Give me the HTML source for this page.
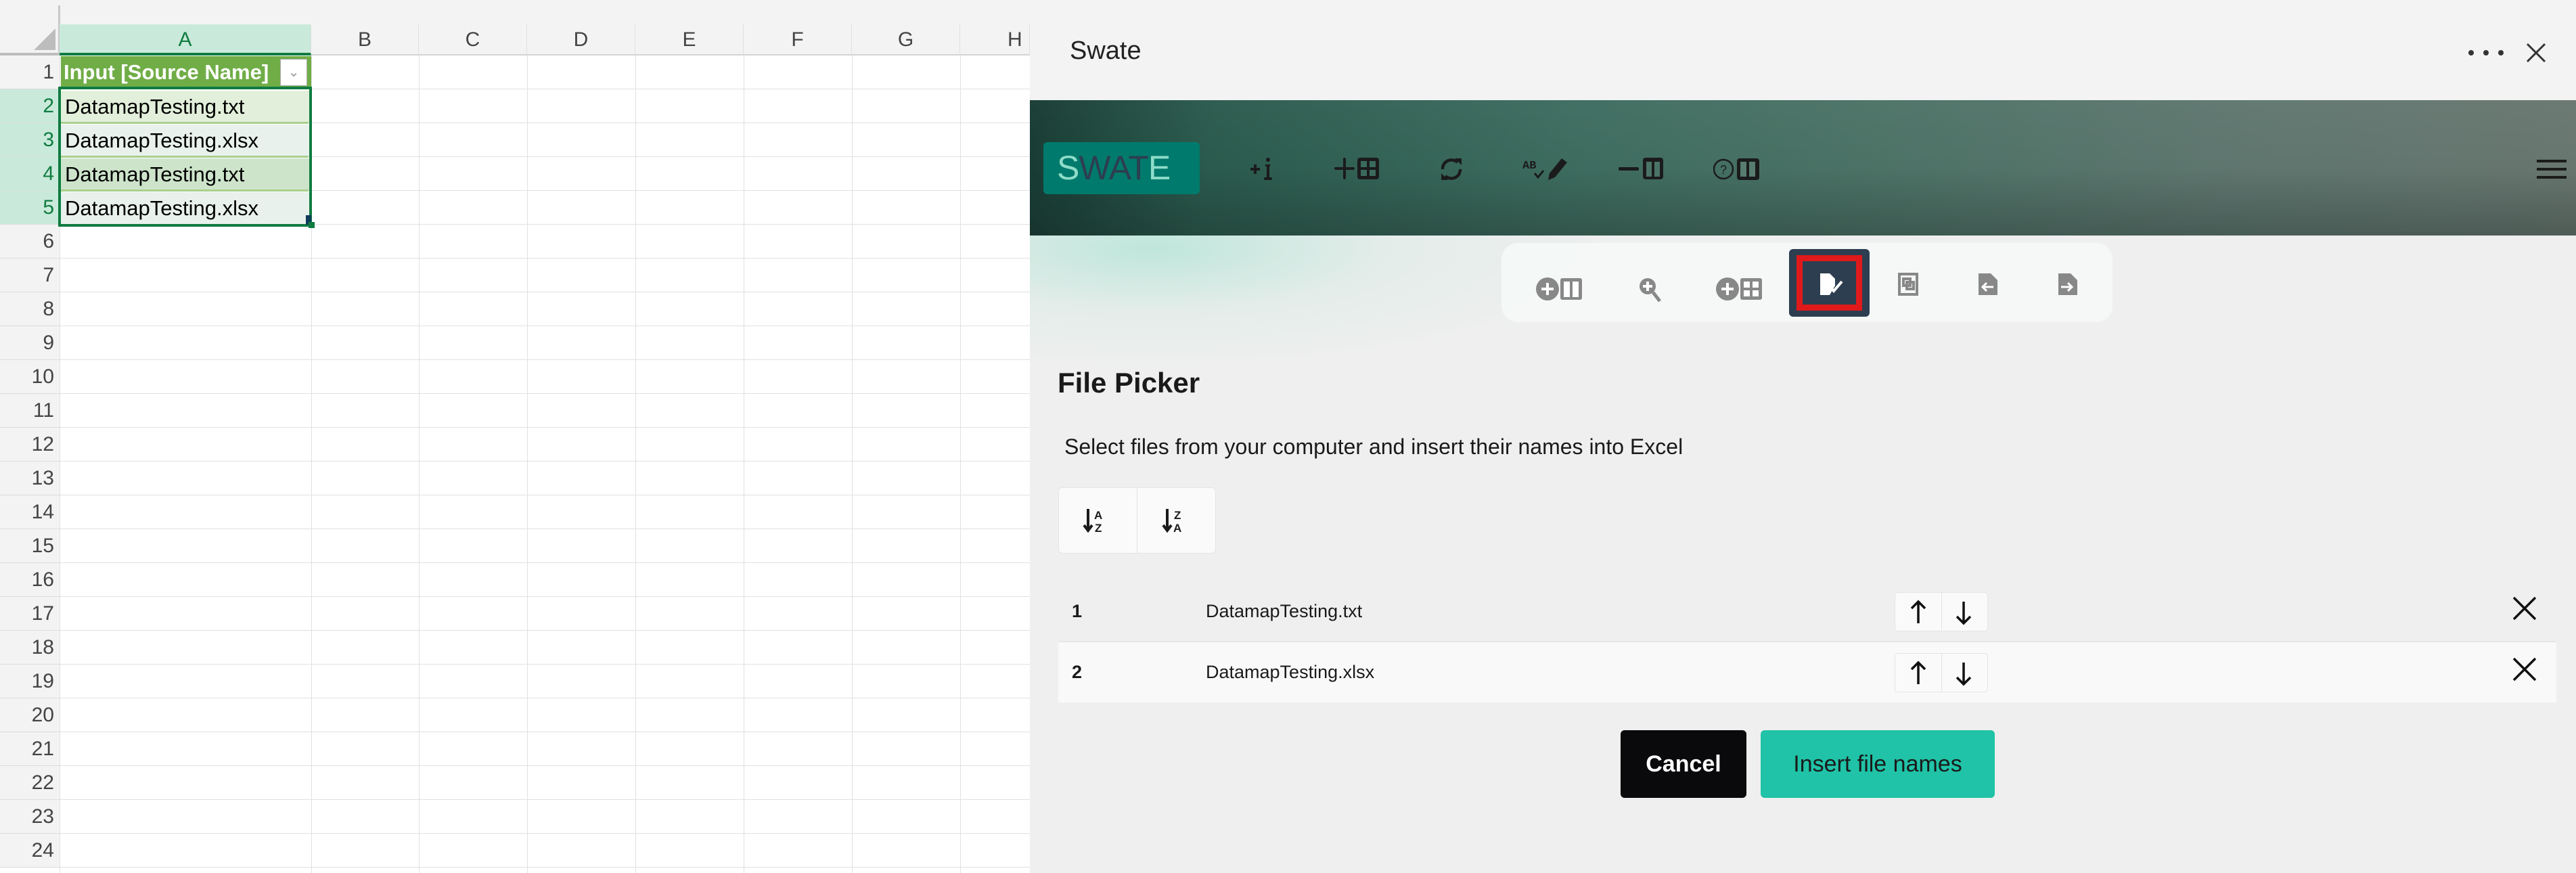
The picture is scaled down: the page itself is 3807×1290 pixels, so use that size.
<!DOCTYPE html>
<html><head><meta charset="utf-8"><style>
*{margin:0;padding:0;box-sizing:border-box}
html,body{width:3807px;height:1290px;overflow:hidden}
body{background:#fff;font-family:"Liberation Sans",sans-serif;position:relative}
.abs{position:absolute}
.xl{left:0;top:0;width:1522px;height:1290px;background:#fff;overflow:hidden}
.colh{top:36px;height:46px;background:#f3f3f3;border-bottom:2px solid #d4d4d4;border-right:1px solid #e0e0e0;color:#444;font-size:30px;text-align:center;line-height:46px}
.rowh{left:0;width:88px;height:50px;background:#f3f3f3;border-bottom:1px solid #dcdcdc;color:#444;font-size:30px;text-align:right;padding-right:8px;line-height:50px}
.vl{top:82px;width:1px;height:1208px;background:#e1e1e1}
.hl{left:88px;width:1434px;height:1px;background:#e1e1e1}
.cell{left:90px;width:368px;height:48px;font-size:31px;line-height:48px;padding-left:6px;color:#000}
.panel{left:1522px;top:0;width:2285px;height:1290px;background:#efefef;overflow:hidden}
.ico{position:absolute;top:232px}
.tb{position:absolute;top:410px}
</style></head><body>
<div class="abs xl">
 <div class="abs" style="left:0;top:0;width:1522px;height:36px;background:#f3f3f3"></div>
 <div class="abs" style="left:0;top:36px;width:88px;height:46px;background:#f3f3f3;border-bottom:4px solid #bdbdbd"></div>
 <div class="abs" style="left:86px;top:8px;width:3px;height:74px;background:#c8c8c8"></div>
 <svg class="abs" style="left:50px;top:42px" width="32" height="32"><polygon points="32,0 32,32 0,32" fill="#bdbdbd"/></svg>
 <div class="abs colh" style="left:88px;width:372px;background:#c9eadb;color:#107c41;border-bottom:4px solid #107c41">A</div>
 <div class="abs colh" style="left:460px;width:159px">B</div>
 <div class="abs colh" style="left:619px;width:160px">C</div>
 <div class="abs colh" style="left:779px;width:160px">D</div>
 <div class="abs colh" style="left:939px;width:160px">E</div>
 <div class="abs colh" style="left:1099px;width:160px">F</div>
 <div class="abs colh" style="left:1259px;width:160px">G</div>
 <div class="abs colh" style="left:1419px;width:103px;text-align:left;padding-left:70px">H</div>
 <div class="abs vl" style="left:88px"></div>
 <div class="abs vl" style="left:460px"></div><div class="abs vl" style="left:619px"></div><div class="abs vl" style="left:779px"></div><div class="abs vl" style="left:939px"></div><div class="abs vl" style="left:1099px"></div><div class="abs vl" style="left:1259px"></div><div class="abs vl" style="left:1419px"></div>
 <div id="rows"></div>
 <div class="abs" style="left:90px;top:83px;width:370px;height:49px;background:#70ad47"></div>
 <div class="abs" style="left:94px;top:84px;color:#fff;font-weight:bold;font-size:31px;line-height:46px">Input [Source Name]</div>
 <div class="abs" style="left:414px;top:87px;width:40px;height:40px;background:#fff;border:1px solid #aaa;color:#999;font-size:20px;text-align:center;line-height:38px">⌄</div>
 <div class="abs cell" style="top:134px;background:#e2efda">DatamapTesting.txt</div>
 <div class="abs cell" style="top:184px;background:#e8f1ec">DatamapTesting.xlsx</div>
 <div class="abs cell" style="top:234px;background:#cde4cb">DatamapTesting.txt</div>
 <div class="abs cell" style="top:284px;background:#e8f1ec">DatamapTesting.xlsx</div>
 <div class="abs" style="left:90px;top:180px;width:366px;height:3px;background:#a9d08e"></div>
 <div class="abs" style="left:90px;top:230px;width:366px;height:3px;background:#a9d08e"></div>
 <div class="abs" style="left:90px;top:280px;width:366px;height:3px;background:#a9d08e"></div>
 <div class="abs" style="left:86px;top:128px;width:375px;height:207px;border:4px solid #107c41"></div>
 <div class="abs" style="left:452px;top:318px;width:8px;height:14px;background:#0e3d5a"></div>
 <div class="abs" style="left:456px;top:328px;width:9px;height:9px;background:#107c41"></div>
</div>
<script>
var h='';for(var i=1;i<=24;i++){var t=82+(i-1)*50;var sel=i>=2&&i<=5;
h+='<div class="abs rowh" style="top:'+t+'px;'+(sel?'background:#c9eadb;color:#107c41;':'')+'">'+i+'</div>';
h+='<div class="abs hl" style="top:'+(t+49)+'px"></div>';}
document.getElementById('rows').innerHTML=h;
</script>
<div class="abs panel">
 <div class="abs" style="left:0;top:0;width:2285px;height:148px;background:#f3f3f3"></div>
 <div class="abs" style="left:59px;top:54px;font-size:38px;color:#222">Swate</div>
 <svg class="abs" style="left:2122px;top:66px" width="60" height="24"><circle cx="8" cy="12" r="4" fill="#333"/><circle cx="30" cy="12" r="4" fill="#333"/><circle cx="52" cy="12" r="4" fill="#333"/></svg>
 <svg class="abs" style="left:2210px;top:62px" width="32" height="32"><path d="M3 3L29 29M29 3L3 29" stroke="#333" stroke-width="3"/></svg>
 <div class="abs" style="left:0;top:148px;width:2285px;height:200px;background:linear-gradient(100deg,#163a32 0%,#2a5a4d 12%,#3d6c5f 35%,#4c7266 55%,#5f766f 78%,#68766f 100%)"></div>
 <div class="abs" style="left:0;top:148px;width:2285px;height:200px;background:linear-gradient(180deg,rgba(255,255,255,0.03) 0%,rgba(0,0,0,0) 50%,rgba(20,30,28,.3) 100%)"></div>
 <div class="abs" style="left:20px;top:210px;width:231px;height:77px;background:#007a6c;border-radius:6px;font-size:50px;line-height:77px;padding-left:20px;letter-spacing:-1px"><span style="color:#8ddcc9">S</span><span style="color:#2d3e50">WAT</span><span style="color:#8ddcc9">E</span></div>
 <svg class="ico" style="left:326px" width="36" height="36" viewBox="0 0 36 36" fill="#1b1b1b"><rect x="0" y="16" width="14" height="4"/><rect x="5" y="11" width="4" height="14"/><circle cx="26" cy="4" r="3"/><rect x="22" y="11" width="7" height="3"/><rect x="24" y="11" width="4" height="22"/><rect x="20" y="30" width="12" height="4" rx="2"/></svg>
 <svg class="ico" style="left:450px" width="66" height="34" viewBox="0 0 66 34" fill="#1b1b1b"><rect x="0" y="15" width="30" height="4" rx="2"/><rect x="13" y="1" width="4" height="32" rx="2"/><rect x="34" y="1" width="32" height="32" rx="4"/><rect x="39" y="6" width="9" height="9" fill="#3a6a5e"/><rect x="52" y="6" width="9" height="9" fill="#3a6a5e"/><rect x="39" y="19" width="9" height="9" fill="#3a6a5e"/><rect x="52" y="19" width="9" height="9" fill="#3a6a5e"/></svg>
 <svg class="ico" style="left:604px" width="38" height="36" viewBox="0 0 38 36"><path d="M6 18A13 13 0 0 1 28 8M32 18A13 13 0 0 1 10 28" stroke="#1b1b1b" stroke-width="4.5" fill="none"/><polygon points="24,2 34,2 34,12" fill="#1b1b1b"/><polygon points="4,24 14,34 4,34" fill="#1b1b1b"/></svg>
 <svg class="ico" style="left:728px" width="72" height="36" viewBox="0 0 72 36"><text x="0" y="17" font-size="17" font-weight="bold" font-family="Liberation Mono" fill="#1b1b1b">AB</text><path d="M18 24l5 6 8-10" stroke="#1b1b1b" stroke-width="3" fill="none"/><path d="M38 34l2-10 18-22 8 6-18 22z" fill="#1b1b1b"/></svg>
 <svg class="ico" style="left:870px" width="66" height="34" viewBox="0 0 66 34" fill="#1b1b1b"><rect x="0" y="15" width="30" height="5" rx="2"/><rect x="36" y="1" width="30" height="32" rx="4"/><rect x="41" y="7" width="8" height="22" fill="#4a7367"/><rect x="53" y="7" width="8" height="22" fill="#4a7367"/></svg>
 <svg class="ico" style="left:1010px" width="68" height="36" viewBox="0 0 68 36"><circle cx="15" cy="18" r="14" stroke="#1b1b1b" stroke-width="2.5" fill="none"/><text x="10" y="25" font-size="18" fill="#1b1b1b" font-family="Liberation Sans">?</text><rect x="35" y="2" width="33" height="32" rx="4" fill="#1b1b1b"/><rect x="40" y="7" width="9" height="22" fill="#577c70"/><rect x="53" y="7" width="9" height="22" fill="#577c70"/></svg>
 <svg class="abs" style="left:2227px;top:234px" width="44" height="32"><rect y="2" width="44" height="4" fill="#1b1b1b"/><rect y="14" width="44" height="4" fill="#1b1b1b"/><rect y="26" width="44" height="4" fill="#1b1b1b"/></svg>
 <div class="abs" style="left:0;top:348px;width:2285px;height:942px;background:radial-gradient(ellipse 700px 180px at 180px 20px,#bfe6db 0%,rgba(220,235,230,.6) 50%,rgba(239,239,239,0) 100%),#efefef"></div>
 <div class="abs" style="left:697px;top:359px;width:903px;height:117px;background:rgba(246,250,249,.8);border-radius:24px"></div>
 <div class="abs" style="left:1122px;top:368px;width:119px;height:100px;background:#2d3e50;border-radius:6px"></div>
 <div class="abs" style="left:1133px;top:377px;width:97px;height:82px;border:9px solid #e0191b"></div>
 <svg class="tb" style="left:748px" width="68" height="34" viewBox="0 0 68 34"><circle cx="17" cy="17" r="17" fill="#888"/><rect x="15" y="8" width="4" height="18" fill="#fff"/><rect x="8" y="15" width="18" height="4" fill="#fff"/><rect x="36" y="1" width="32" height="32" rx="3" fill="#888"/><rect x="41" y="6" width="9" height="23" fill="#fff"/><rect x="54" y="6" width="9" height="23" fill="#fff"/></svg>
 <svg class="tb" style="left:900px" width="34" height="36" viewBox="0 0 34 36"><circle cx="13" cy="13" r="12" fill="#888"/><rect x="11" y="6" width="4" height="14" fill="#fff"/><rect x="6" y="11" width="14" height="4" fill="#fff"/><path d="M21 22l10 13" stroke="#888" stroke-width="5"/></svg>
 <svg class="tb" style="left:1014px" width="68" height="34" viewBox="0 0 68 34"><circle cx="17" cy="17" r="17" fill="#888"/><rect x="15" y="8" width="4" height="18" fill="#fff"/><rect x="8" y="15" width="18" height="4" fill="#fff"/><rect x="36" y="1" width="32" height="32" rx="3" fill="#888"/><rect x="41" y="6" width="9" height="9" fill="#fff"/><rect x="54" y="6" width="9" height="9" fill="#fff"/><rect x="41" y="19" width="9" height="9" fill="#fff"/><rect x="54" y="19" width="9" height="9" fill="#fff"/></svg>
 <svg class="tb" style="left:1166px;top:402px" width="36" height="36" viewBox="0 0 36 36"><path d="M2 2h14l8 8v10l-8 14H2z" fill="#fff"/><path d="M12 30l6-6 4 4 12-14" stroke="#fff" stroke-width="4" fill="none"/></svg>
 <svg class="tb" style="left:1282px;top:402px" width="32" height="36" viewBox="0 0 32 36" fill="none" stroke="#888" stroke-width="4"><rect x="3" y="3" width="26" height="30"/><rect x="9" y="10" width="10" height="10"/><rect x="14" y="15" width="10" height="10"/></svg>
 <svg class="tb" style="left:1402px;top:402px" width="28" height="36" viewBox="0 0 28 36"><path d="M0 2h18l10 10v22H0z" fill="#888"/><path d="M22 22H6M12 16l-6 6 6 6" stroke="#fff" stroke-width="3" fill="none"/></svg>
 <svg class="tb" style="left:1520px;top:402px" width="28" height="36" viewBox="0 0 28 36"><path d="M0 2h18l10 10v22H0z" fill="#888"/><path d="M4 22h16M14 16l6 6-6 6" stroke="#fff" stroke-width="3" fill="none"/></svg>
 <div class="abs" style="left:41px;top:542px;font-size:42px;font-weight:bold;color:#1a1a1a">File Picker</div>
 <div class="abs" style="left:51px;top:642px;font-size:32px;color:#1a1a1a">Select files from your computer and insert their names into Excel</div>
 <div class="abs" style="left:42px;top:720px;width:233px;height:98px;background:#fafafa;border:1px solid #e4e4e4;border-radius:6px"></div>
 <div class="abs" style="left:158px;top:720px;width:1px;height:98px;background:#e4e4e4"></div>
 <svg class="abs" style="left:78px;top:750px" width="36" height="38" viewBox="0 0 36 38"><path d="M8 2v30M2 26l6 8 6-8" stroke="#1a1a1a" stroke-width="4" fill="none"/><text x="17" y="17" font-size="17" font-weight="bold" fill="#1a1a1a" font-family="Liberation Sans">A</text><text x="18" y="36" font-size="17" font-weight="bold" fill="#1a1a1a" font-family="Liberation Sans">Z</text></svg>
 <svg class="abs" style="left:195px;top:750px" width="36" height="38" viewBox="0 0 36 38"><path d="M8 2v30M2 26l6 8 6-8" stroke="#1a1a1a" stroke-width="4" fill="none"/><text x="18" y="17" font-size="17" font-weight="bold" fill="#1a1a1a" font-family="Liberation Sans">Z</text><text x="17" y="36" font-size="17" font-weight="bold" fill="#1a1a1a" font-family="Liberation Sans">A</text></svg>
 <div class="abs" style="left:42px;top:947px;width:2214px;height:2px;background:#e6e6e6"></div>
 <div class="abs" style="left:42px;top:949px;width:2214px;height:89px;background:#f9f9f9"></div>
 <div class="abs" style="left:62px;top:888px;font-size:27px;font-weight:bold;color:#1a1a1a">1</div>
 <div class="abs" style="left:260px;top:888px;font-size:27px;color:#1a1a1a">DatamapTesting.txt</div>
 <div class="abs" style="left:62px;top:978px;font-size:27px;font-weight:bold;color:#1a1a1a">2</div>
 <div class="abs" style="left:260px;top:978px;font-size:27px;color:#1a1a1a">DatamapTesting.xlsx</div>
 <div class="abs" style="left:1278px;top:875px;width:138px;height:58px;background:#fafafa;border:1px solid #e4e4e4;border-radius:5px"></div>
 <div class="abs" style="left:1278px;top:965px;width:138px;height:58px;background:#fafafa;border:1px solid #e4e4e4;border-radius:5px"></div>
 <div class="abs" style="left:1347px;top:875px;width:1px;height:58px;background:#e4e4e4"></div>
 <div class="abs" style="left:1347px;top:965px;width:1px;height:58px;background:#e4e4e4"></div>
 <svg class="abs" style="left:1300px;top:885px" width="100" height="40"><path d="M13 36V4M3 14L13 4l10 10M80 4v32M70 26l10 10 10-10" stroke="#111" stroke-width="3.5" fill="none"/></svg>
 <svg class="abs" style="left:1300px;top:975px" width="100" height="40"><path d="M13 36V4M3 14L13 4l10 10M80 4v32M70 26l10 10 10-10" stroke="#111" stroke-width="3.5" fill="none"/></svg>
 <svg class="abs" style="left:2190px;top:880px" width="38" height="38"><path d="M3 3L35 35M35 3L3 35" stroke="#111" stroke-width="3.5"/></svg>
 <svg class="abs" style="left:2190px;top:970px" width="38" height="38"><path d="M3 3L35 35M35 3L3 35" stroke="#111" stroke-width="3.5"/></svg>
 <div class="abs" style="left:873px;top:1079px;width:186px;height:100px;background:#0a0a0c;border-radius:6px;color:#fff;font-size:34px;font-weight:bold;text-align:center;line-height:100px">Cancel</div>
 <div class="abs" style="left:1080px;top:1079px;width:346px;height:100px;background:#20c3a7;border-radius:6px;color:#1a1a1a;font-size:34px;text-align:center;line-height:100px">Insert file names</div>
</div>
</body></html>
